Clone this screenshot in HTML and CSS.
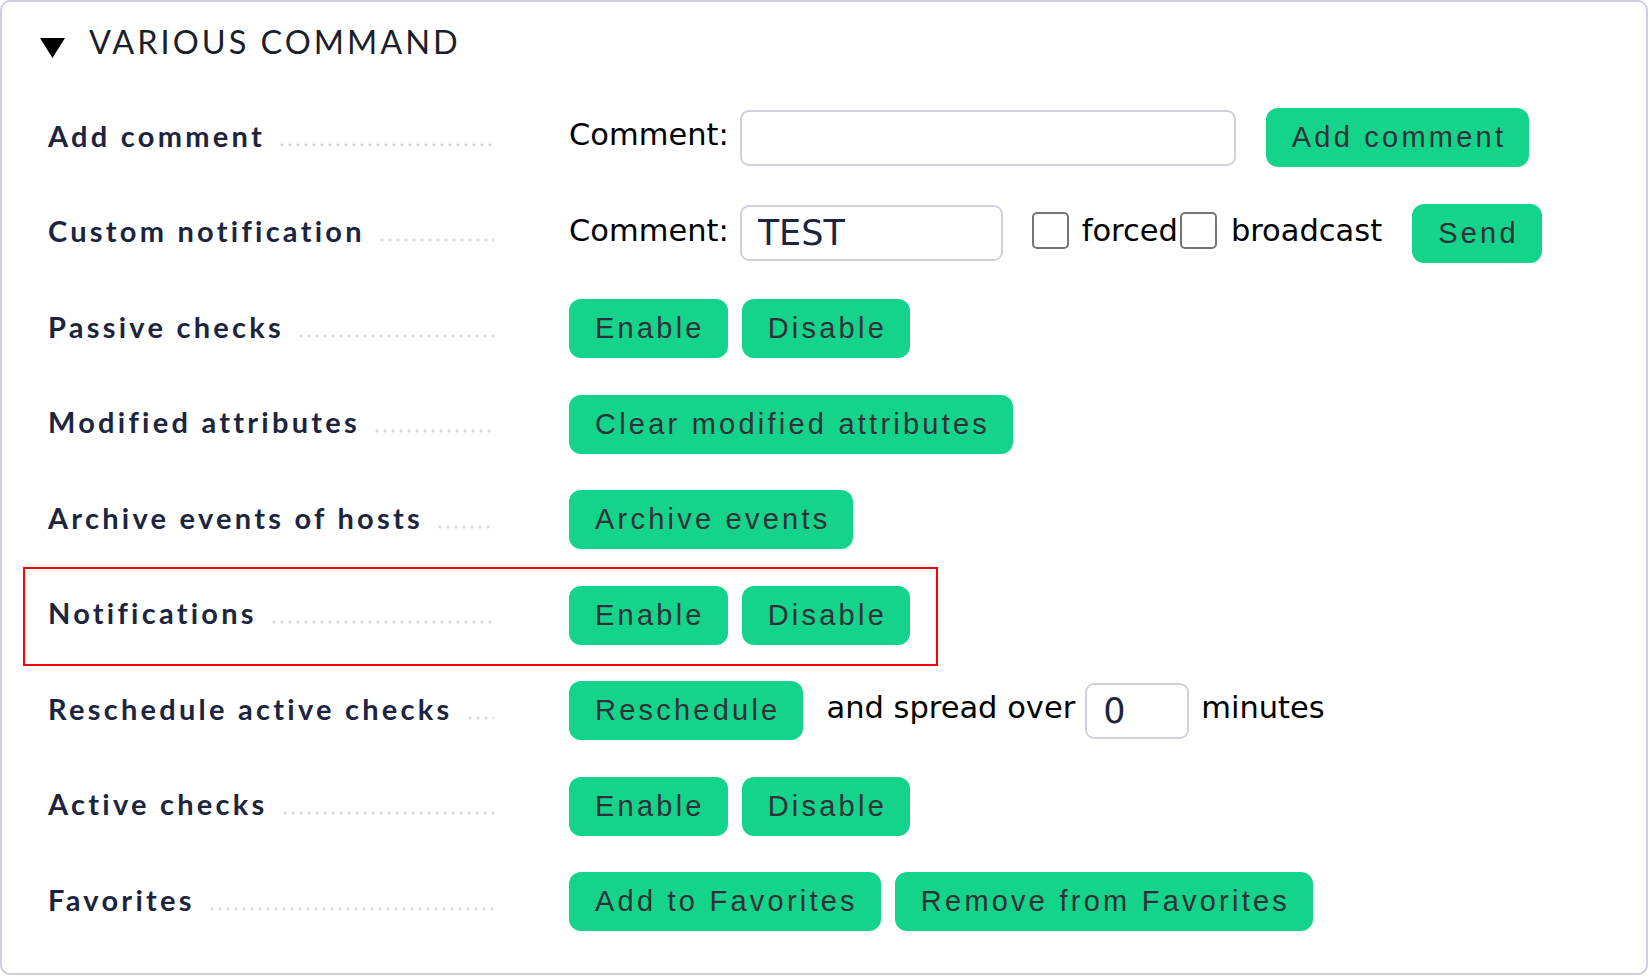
FILE: index.html
```html
<!DOCTYPE html>
<html lang="en">
<head>
<meta charset="utf-8">
<title>Various commands</title>
<link rel="stylesheet" href="styles.css">
</head>
<body>
<div class="box">
  <div class="head">
    <svg class="tri" width="25" height="20" viewBox="0 0 25 20"><path d="M0 0H25L12.5 20Z" fill="#000"/></svg>
    <div class="title">VARIOUS COMMANDS</div>
  </div>

  <div class="row">
    <div class="legend"><span class="ltext">Add comment</span><span class="dots"></span></div>
    <div class="content">
      <span class="txt">Comment:</span>
      <input class="inp inp-long" type="text" value="">
      <button class="btn gap-btn">Add comment</button>
    </div>
  </div>

  <div class="row">
    <div class="legend"><span class="ltext">Custom notification</span><span class="dots"></span></div>
    <div class="content">
      <span class="txt">Comment:</span>
      <input class="inp inp-mid" type="text" value="TEST">
      <input class="chk chk-first" type="checkbox">
      <span class="txt t-forced">forced</span>
      <input class="chk chk-second" type="checkbox">
      <span class="txt t-broad">broadcast</span>
      <button class="btn gap-btn">Send</button>
    </div>
  </div>

  <div class="row">
    <div class="legend"><span class="ltext">Passive checks</span><span class="dots"></span></div>
    <div class="content">
      <button class="btn">Enable</button><button class="btn">Disable</button>
    </div>
  </div>

  <div class="row">
    <div class="legend"><span class="ltext">Modified attributes</span><span class="dots"></span></div>
    <div class="content">
      <button class="btn">Clear modified attributes</button>
    </div>
  </div>

  <div class="row">
    <div class="legend"><span class="ltext">Archive events of hosts</span><span class="dots"></span></div>
    <div class="content">
      <button class="btn">Archive events</button>
    </div>
  </div>

  <div class="row hl">
    <div class="legend"><span class="ltext">Notifications</span><span class="dots"></span></div>
    <div class="content">
      <button class="btn">Enable</button><button class="btn">Disable</button>
    </div>
  </div>

  <div class="row">
    <div class="legend"><span class="ltext">Reschedule active checks</span><span class="dots"></span></div>
    <div class="content">
      <button class="btn">Reschedule</button>
      <span class="txt t-spread">and spread over</span>
      <input class="inp inp-num" type="text" value="0">
      <span class="txt t-min">minutes</span>
    </div>
  </div>

  <div class="row">
    <div class="legend"><span class="ltext">Active checks</span><span class="dots"></span></div>
    <div class="content">
      <button class="btn">Enable</button><button class="btn">Disable</button>
    </div>
  </div>

  <div class="row">
    <div class="legend"><span class="ltext">Favorites</span><span class="dots"></span></div>
    <div class="content">
      <button class="btn">Add to Favorites</button><button class="btn">Remove from Favorites</button>
    </div>
  </div>
</div>
</body>
</html>
```

FILE: styles.css
```css
* { box-sizing: border-box; }
html, body { margin: 0; padding: 0; background: #fff; }
body { width: 1650px; height: 977px; overflow: hidden; }

.box {
  width: 1648px;
  height: 975px;
  border: 2px solid #cdd0dc;
  border-radius: 10px;
  padding: 0 0 0 46px;
}

.head {
  height: 87.75px;
  display: flex;
  align-items: flex-start;
  margin-left: -8px;
}
.tri { flex: none; margin-top: 36px; }
.title {
  margin-left: 24px;
  margin-top: 20.4px;
  width: 372px;
  overflow: hidden;
  white-space: nowrap;
  font: 400 32.5px/40px Lato, sans-serif;
  letter-spacing: 3px;
  color: #1a1f2b;
}

.row {
  position: relative;
  height: 95.5px;
  display: grid;
  grid-template-columns: 446px 1fr;
  column-gap: 75px;
  align-items: center;
}
.hl::after {
  content: "";
  position: absolute;
  left: -25px;
  top: 0;
  width: 911px;
  height: 95px;
  border: 2px solid #f00;
  pointer-events: none;
}

.legend {
  display: flex;
  align-items: baseline;
  padding-bottom: 3px;
}
.ltext {
  font: 700 29px/1.2 Lato, sans-serif;
  letter-spacing: 3.25px;
  color: #1c2540;
  white-space: nowrap;
}
.dots {
  flex: 1;
  height: 4px;
  margin-left: 13px;
  background: radial-gradient(circle, #d5d7db 1.3px, transparent 1.8px) left center / 8px 4px repeat-x;
}

.content {
  display: flex;
  align-items: center;
}
.txt {
  font: 400 30.5px "DejaVu Sans", sans-serif;
  color: #000;
  white-space: nowrap;
  margin-bottom: 6px;
}
.btn {
  flex: none;
  height: 59px;
  padding: 0 23px 0 26px;
  border: 0;
  border-radius: 12px;
  background: #14d38b;
  color: #2e3135;
  font: 400 29px/59px "Liberation Sans", Arial, sans-serif;
  letter-spacing: 3.23px;
  white-space: nowrap;
}
.btn + .btn { margin-left: 14px; }
.gap-btn { margin-left: 30px; }

.inp {
  flex: none;
  height: 56px;
  margin-left: 11px;
  padding: 0 0 0 16px;
  border: 2px solid #cfd2de;
  border-radius: 9px;
  background: #fff;
  font: 400 35px "DejaVu Sans", sans-serif;
  color: #1c2540;
  outline: none;
}
.inp-long { width: 496px; }
.inp-mid { width: 263px; }
.inp-num { width: 104px; margin-left: 10px; }

.chk {
  -webkit-appearance: none;
  appearance: none;
  flex: none;
  width: 37px;
  height: 37px;
  margin: 0 0 6px 0;
  border: 2px solid #767676;
  border-radius: 5px;
  background: #fff;
}
.chk-first { margin-left: 29px; }
.chk-second { margin-left: 2px; }
.t-forced { margin-left: 13px; }
.t-broad { margin-left: 14px; }
.t-spread { margin-left: 23px; }
.t-min { margin-left: 12px; }
```
